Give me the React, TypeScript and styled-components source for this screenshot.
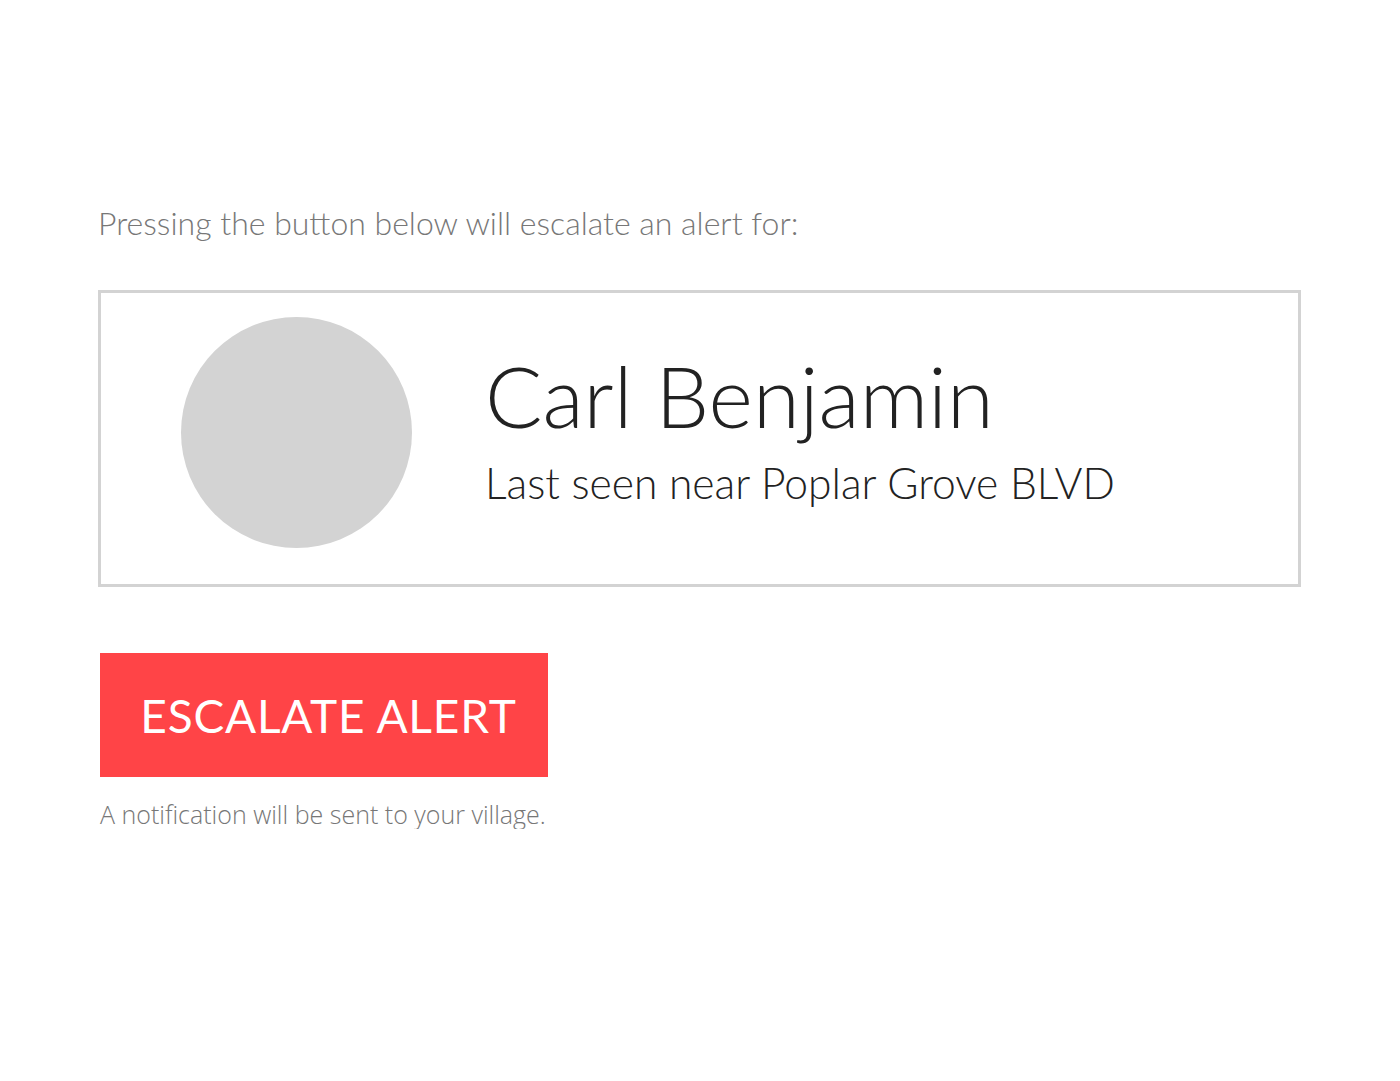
import styled, { createGlobalStyle } from 'styled-components';

const GlobalStyle = createGlobalStyle`
    body {
        margin: 0;
        background: #fff;
        font-family: Lato, 'Open Sans', sans-serif;
    }
`;

const Page = styled.div`
    padding: 200px 98px 0 98px;
    display: flex;
    flex-direction: column;
    align-items: flex-start;
`;

const Intro = styled.p`
    margin: 0;
    font-size: 32px;
    font-weight: 300;
    line-height: 46px;
    color: #777;
`;

const Card = styled.div`
    margin-top: 44px;
    width: 1203px;
    height: 297px;
    box-sizing: border-box;
    border: 3px solid #d3d3d3;
    display: flex;
    align-items: flex-start;
    padding: 24px 0 0 80px;
`;

const Avatar = styled.div`
    width: 231px;
    height: 231px;
    border-radius: 50%;
    background: #d3d3d3;
    flex-shrink: 0;
`;

const Details = styled.div`
    margin-left: 73px;
    display: flex;
    flex-direction: column;
    color: #222;
`;

const Name = styled.h1`
    margin: 36px 0 0 0;
    font-size: 85px;
    font-weight: 300;
    line-height: 85px;
`;

const Location = styled.div`
    margin-top: 19px;
    font-size: 42.6px;
    font-weight: 300;
    line-height: 52px;
`;

const EscalateButton = styled.button`
    margin: 66px 0 0 2px;
    padding: 0 0 0 9px;
    width: 448px;
    height: 124px;
    border: none;
    background: #ff4447;
    color: #fff;
    font-family: Lato, 'Open Sans', sans-serif;
    font-size: 46px;
    font-weight: 400;
    letter-spacing: 0.8px;
    cursor: pointer;
`;

const Note = styled.p`
    margin: 22px 0 0 2px;
    font-family: 'Open Sans', sans-serif;
    font-size: 25px;
    font-weight: 300;
    line-height: 30px;
    color: #777;
`;

const App: React.FC = () => {
    return (
        <>
            <GlobalStyle />
            <Page>
                <Intro>Pressing the button below will escalate an alert for:</Intro>
                <Card>
                    <Avatar />
                    <Details>
                        <Name>Carl Benjamin</Name>
                        <Location>Last seen near Poplar Grove BLVD</Location>
                    </Details>
                </Card>
                <EscalateButton>ESCALATE ALERT</EscalateButton>
                <Note>A notification will be sent to your village.</Note>
            </Page>
        </>
    );
};

export default App;
